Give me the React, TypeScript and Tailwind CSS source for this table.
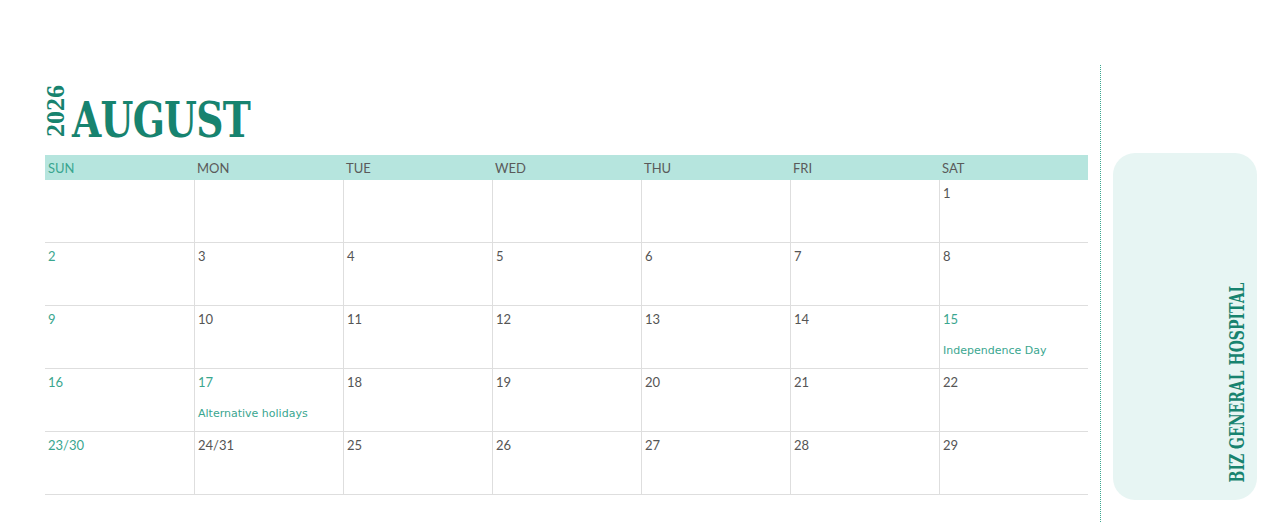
const days = ["SUN", "MON", "TUE", "WED", "THU", "FRI", "SAT"];

type Cell = { n?: string; note?: string };

const weeks: Cell[][] = [
  [{}, {}, {}, {}, {}, {}, { n: "1" }],
  [{ n: "2" }, { n: "3" }, { n: "4" }, { n: "5" }, { n: "6" }, { n: "7" }, { n: "8" }],
  [{ n: "9" }, { n: "10" }, { n: "11" }, { n: "12" }, { n: "13" }, { n: "14" }, { n: "15", note: "Independence Day" }],
  [{ n: "16" }, { n: "17", note: "Alternative holidays" }, { n: "18" }, { n: "19" }, { n: "20" }, { n: "21" }, { n: "22" }],
  [{ n: "23/30" }, { n: "24/31" }, { n: "25" }, { n: "26" }, { n: "27" }, { n: "28" }, { n: "29" }],
];

export default function App() {
  return (
    <div className="w-[1280px] h-[522px] bg-white flex overflow-hidden">
      {/* calendar */}
      <div className="pl-[45px] pt-[84px]">
        <div className="flex items-end h-[56px]">
          <div className="[writing-mode:vertical-rl] [transform:rotate(180deg)] font-['Liberation_Serif',serif] font-bold text-[26px] leading-[22px] text-[#17836f] mb-[3px]">
            2026
          </div>
          <div className="font-['DejaVu_Serif',serif] font-bold text-[49px] leading-none text-[#17836f] tracking-[-1px] ml-[5px] mb-[-5px] [transform:scaleX(0.77)] origin-left">
            AUGUST
          </div>
        </div>

        <div className="mt-[15px] w-[1043px]">
          <div className="grid grid-cols-7 h-[25px] bg-[#b6e5de] font-['Lato',sans-serif] text-[13px]">
            {days.map((d, i) => (
              <div key={d} className={`pl-[3px] pt-[4px] ${i === 0 ? "text-[#3aa68f]" : "text-[#5a5a5a]"}`}>
                {d}
              </div>
            ))}
          </div>
          {weeks.map((w, r) => (
            <div key={r} className="grid grid-cols-7 h-[63px] border-b border-[#dedede]">
              {w.map((c, i) => {
                const teal = i === 0 || !!c.note;
                return (
                  <div key={i} className={`pl-[3px] pt-[5px] ${i > 0 ? "border-l border-[#dedede]" : ""}`}>
                    <div className={`font-['Lato',sans-serif] text-[13px] leading-[16px] ${teal ? "text-[#3aa68f]" : "text-[#555555]"}`}>
                      {c.n}
                    </div>
                    {c.note && (
                      <div className="mt-[17px] font-['DejaVu_Sans',sans-serif] text-[11px] leading-[14px] text-[#3aa68f]">
                        {c.note}
                      </div>
                    )}
                  </div>
                );
              })}
            </div>
          ))}
        </div>
      </div>

      {/* divider */}
      <div className="ml-[12px] mt-[65px] h-[457px] border-l border-dotted border-[#3aa68f]" />

      {/* side card */}
      <div className="ml-[12px] mt-[153px] w-[144px] h-[347px] rounded-[22px] bg-[#e7f5f3] flex items-end justify-end pr-[10px] pb-[18px]">
        <div className="[writing-mode:vertical-rl] [transform:rotate(180deg)]">
          <div className="[transform:scaleY(0.7)] origin-top font-['DejaVu_Serif',serif] font-bold text-[20px] leading-[20px] text-[#17836f] whitespace-nowrap">
            BIZ GENERAL HOSPITAL
          </div>
        </div>
      </div>
    </div>
  );
}
